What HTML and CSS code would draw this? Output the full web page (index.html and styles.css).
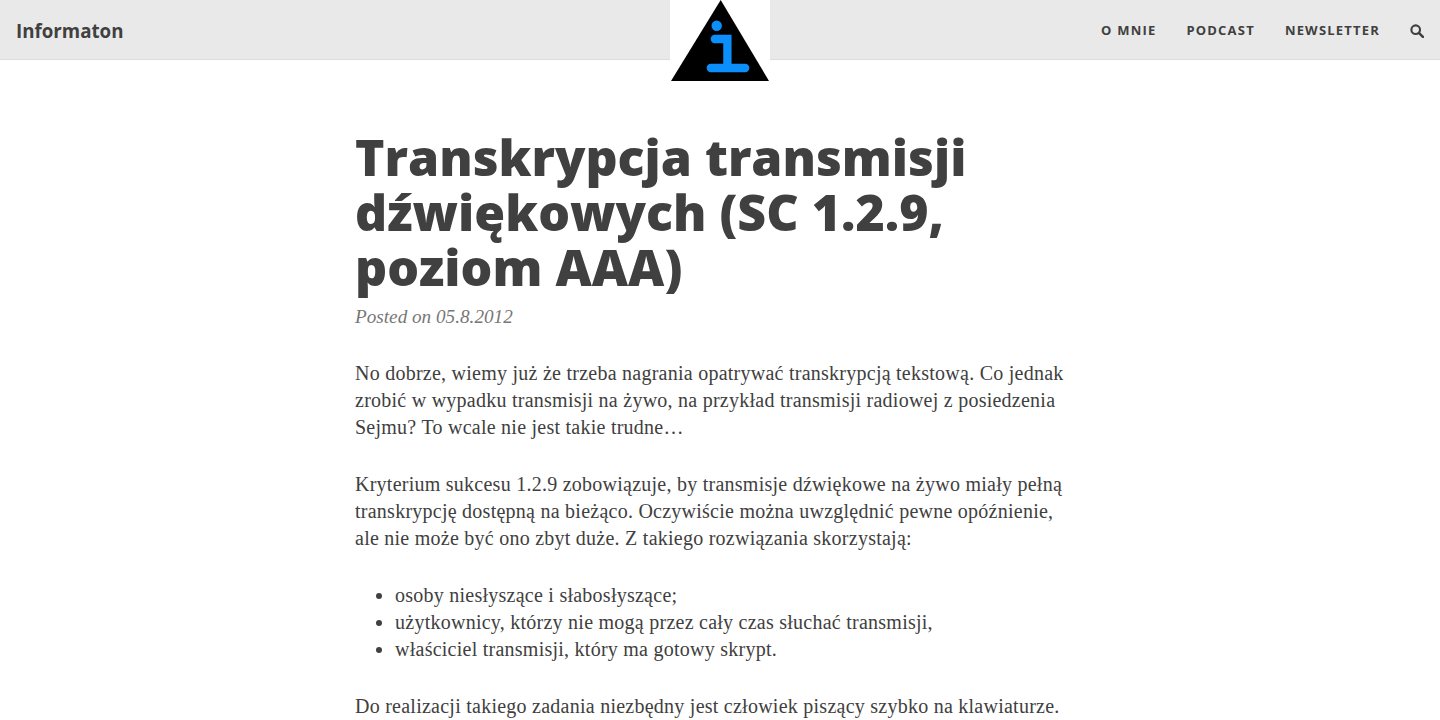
FILE: index.html
```html
<!DOCTYPE html>
<html lang="pl">
<head>
  <meta charset="UTF-8" />
  <title>Transkrypcja transmisji dźwiękowych (SC 1.2.9, poziom AAA)</title>
  <link rel="stylesheet" href="styles.css">
</head>
<body>
  <header class="navbar">
    <a class="brand" href="#">Informaton</a>
    <a class="logo" href="#" aria-label="Informaton">
      <svg width="100" height="81" viewBox="0 0 100 81">
        <rect width="100" height="81" fill="#fff"/>
        <path d="M50.7 0 L99 81 L1 81 Z" fill="#000"/>
        <circle cx="46.7" cy="25.7" r="5.2" fill="#0b8ffb"/>
        <path d="M44.8 39 H57.4 V68 M40.8 68 H75.2" fill="none" stroke="#0b8ffb" stroke-width="8.3" stroke-linecap="round"/>
      </svg>
    </a>
    <nav class="nav-links">
      <a href="#">O mnie</a>
      <a href="#">Podcast</a>
      <a href="#">Newsletter</a>
      <a href="#" class="search" aria-label="Szukaj">
        <svg width="14" height="14" viewBox="0 0 13 13">
          <circle cx="5.3" cy="5.3" r="4" fill="none" stroke="#404040" stroke-width="2"/>
          <path d="M8.2 8.2 L12 12" stroke="#404040" stroke-width="2.4" stroke-linecap="round"/>
        </svg>
      </a>
    </nav>
  </header>

  <main class="content">
    <article>
      <h1>Transkrypcja transmisji dźwiękowych (SC 1.2.9, poziom AAA)</h1>
      <div class="meta">Posted on 05.8.2012</div>
      <p>No dobrze, wiemy już że trzeba nagrania opatrywać transkrypcją tekstową. Co jednak zrobić w wypadku transmisji na żywo, na przykład transmisji radiowej z posiedzenia Sejmu? To wcale nie jest takie trudne…</p>
      <p>Kryterium sukcesu 1.2.9 zobowiązuje, by transmisje dźwiękowe na żywo miały pełną transkrypcję dostępną na bieżąco. Oczywiście można uwzględnić pewne opóźnienie, ale nie może być ono zbyt duże. Z takiego rozwiązania skorzystają:</p>
      <ul>
        <li>osoby niesłyszące i słabosłyszące;</li>
        <li>użytkownicy, którzy nie mogą przez cały czas słuchać transmisji,</li>
        <li>właściciel transmisji, który ma gotowy skrypt.</li>
      </ul>
      <p>Do realizacji takiego zadania niezbędny jest człowiek piszący szybko na klawiaturze.</p>
    </article>
  </main>
</body>
</html>
```

FILE: styles.css
```css
html, body {
  margin: 0;
  padding: 0;
  height: 100%;
  overflow: hidden;
}
body {
  background: #fff;
  color: #404040;
  font-family: "Liberation Serif", serif;
  font-size: 20px;
  letter-spacing: 0.25px;
  line-height: 27px;
}
a {
  color: inherit;
  text-decoration: none;
}
.navbar {
  position: relative;
  display: flex;
  justify-content: space-between;
  align-items: center;
  box-sizing: content-box;
  height: 57px;
  padding: 2px 16px 0;
  background: #e9e9e9;
  border-bottom: 1px solid #ddd;
  font-family: "Open Sans", sans-serif;
  letter-spacing: 0;
}
.brand {
  font-size: 18.72px;
  font-weight: 700;
}
.logo {
  position: absolute;
  top: 0;
  left: 670px;
  width: 100px;
  height: 81px;
}
.logo svg {
  display: block;
}
.nav-links {
  display: flex;
  align-items: center;
  gap: 30px;
  font-size: 13px;
  font-weight: 700;
  letter-spacing: 1.2px;
  text-transform: uppercase;
}
.search {
  display: flex;
}
.content {
  width: 730px;
  margin: 0 auto;
  padding-top: 70px;
}
article {
  width: 720px;
}
h1 {
  margin: 0;
  font-family: "Open Sans", sans-serif;
  font-size: 50px;
  font-weight: 800;
  letter-spacing: 0;
  line-height: 55px;
}
.meta {
  margin-top: 8px;
  color: #777;
  font-size: 19.2px;
  font-style: italic;
  letter-spacing: 0;
}
p {
  margin: 30px 0 0;
}
ul {
  margin: 30px 0 0;
  padding-left: 40px;
}
```
